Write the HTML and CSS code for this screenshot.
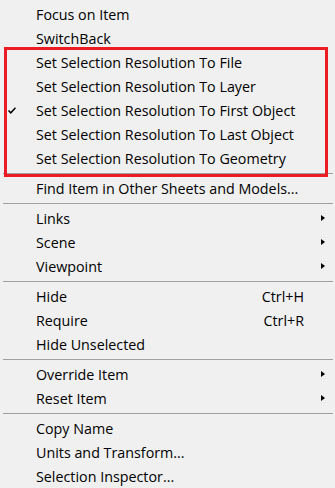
FILE: index.html
```html
<!DOCTYPE html>
<html>
<head>
<meta charset="utf-8">
<link rel="stylesheet" href="styles.css">
</head>
<body>
<div class="menu">
  <div class="item"><span class="check"></span><span class="label">Focus on Item</span></div>
  <div class="item"><span class="check"></span><span class="label">SwitchBack</span></div>
  <div class="item"><span class="check"></span><span class="label">Set Selection Resolution To File</span></div>
  <div class="item"><span class="check"></span><span class="label">Set Selection Resolution To Layer</span></div>
  <div class="item"><span class="check"><svg width="8" height="7" viewBox="0 0 8 7"><polyline points="0.5,3.5 2.8,5.8 7.5,0.8" fill="none" stroke="#000" stroke-width="1.5"/></svg></span><span class="label">Set Selection Resolution To First Object</span></div>
  <div class="item"><span class="check"></span><span class="label">Set Selection Resolution To Last Object</span></div>
  <div class="item"><span class="check"></span><span class="label">Set Selection Resolution To Geometry</span></div>
  <div class="sep"></div>
  <div class="item"><span class="check"></span><span class="label">Find Item in Other Sheets and Models...</span></div>
  <div class="sep"></div>
  <div class="item"><span class="check"></span><span class="label">Links</span><span class="arrow"></span></div>
  <div class="item"><span class="check"></span><span class="label">Scene</span><span class="arrow"></span></div>
  <div class="item"><span class="check"></span><span class="label">Viewpoint</span><span class="arrow"></span></div>
  <div class="sep"></div>
  <div class="item"><span class="check"></span><span class="label">Hide</span><span class="key">Ctrl+H</span></div>
  <div class="item"><span class="check"></span><span class="label">Require</span><span class="key">Ctrl+R</span></div>
  <div class="item"><span class="check"></span><span class="label">Hide Unselected</span></div>
  <div class="sep"></div>
  <div class="item"><span class="check"></span><span class="label">Override Item</span><span class="arrow"></span></div>
  <div class="item"><span class="check"></span><span class="label">Reset Item</span><span class="arrow"></span></div>
  <div class="sep"></div>
  <div class="item"><span class="check"></span><span class="label">Copy Name</span></div>
  <div class="item"><span class="check"></span><span class="label">Units and Transform...</span></div>
  <div class="item"><span class="check"></span><span class="label">Selection Inspector...</span></div>
  <div class="highlight"></div>
</div>
</body>
</html>
```
FILE: styles.css
```css
html, body {
  margin: 0;
  padding: 0;
  background: #f0f0f0;
}
.menu {
  position: relative;
  width: 335px;
  height: 488px;
  box-sizing: border-box;
  padding-top: 2px;
  display: flex;
  flex-direction: column;
  font-family: "Open Sans", "Noto Sans", sans-serif;
  font-size: 14.3px;
  color: #000;
  overflow: hidden;
}
.item {
  height: 24px;
  display: flex;
  align-items: center;
  white-space: nowrap;
}
.check {
  width: 36px;
  flex: none;
  display: flex;
  align-items: center;
  padding-left: 8px;
  box-sizing: border-box;
}
.check svg { display: block; }
.label {
  flex: 1;
}
.key {
  flex: none;
  margin-right: 31px;
}
.arrow {
  flex: none;
  width: 0;
  height: 0;
  border-left: 4px solid #000;
  border-top: 3.5px solid transparent;
  border-bottom: 3.5px solid transparent;
  margin-right: 10px;
}
.sep {
  height: 1px;
  background: #a0a0a0;
  margin: 3px 2px 2px 3px;
  flex: none;
}
.highlight {
  position: absolute;
  left: 4px;
  top: 47px;
  width: 324px;
  height: 130px;
  box-sizing: border-box;
  border: 3px solid #ec1c24;
}
```
